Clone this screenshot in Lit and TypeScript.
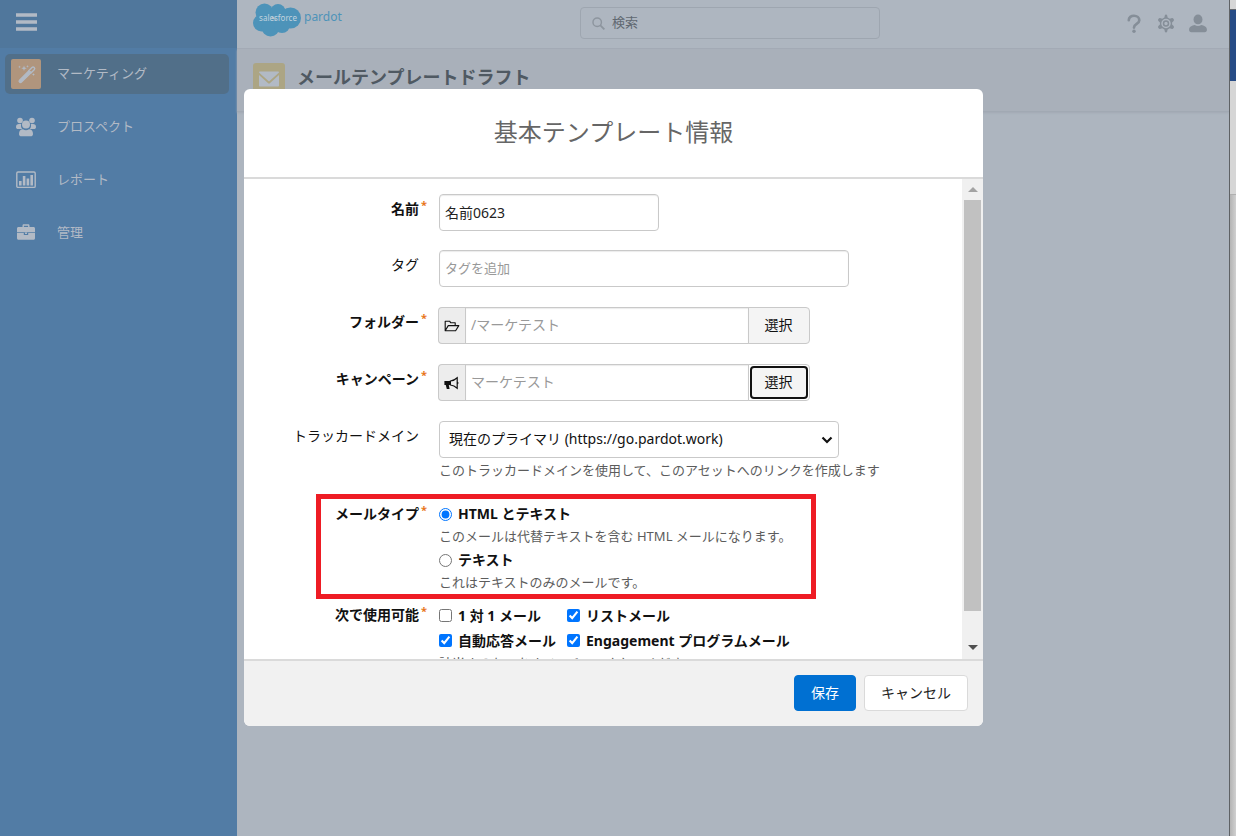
import { LitElement, html, css, svg } from "lit";
import { customElement } from "lit/decorators.js";
import { classMap } from "lit/directives/class-map.js";

const fonts = css`"Noto Sans", "Noto Sans CJK JP", sans-serif`;

const icons: Record<string, unknown> = {
  wand: svg`<path d="M3.500 16.200 12.700 7l2 2-9.200 9.200a1.400 1.400 0 0 1-2-2z" stroke="currentColor" stroke-width="1.200" stroke-linejoin="round"/><path d="m13 6.600 3-3a1.500 1.500 0 0 1 2.200 2.200l-3 3z" fill="none" stroke="currentColor" stroke-width="1.400"/><path d="m8 1.500.7 2 2 .7-2 .7L8 7l-.7-2.100-2-.7 2-.7zM3.500 1.500l.4 1 1 .4-1 .4-.4 1-.4-1-1-.4 1-.4zM11.500 1l.4 1 1 .4-1 .4-.4 1-.4-1-1-.4 1-.4zM17.500 9l.4 1.100 1.100.4-1.100.4-.4 1.100-.4-1.100-1.100-.4 1.100-.4z"/>`,
  people: svg`<circle cx="4" cy="3.500" r="2.800"/><circle cx="16" cy="3.500" r="2.800"/><path d="M0 10C0 7.900 1.200 7.100 3 7.100h2.200c-.5 1.900-.1 3.800 1 5H2.200C.8 12.100 0 11.500 0 10zM20 10c0-2.100-1.200-2.900-3-2.900h-2.200c.5 1.900.1 3.800-1 5h4c1.400 0 2.200-.6 2.200-2.100z"/><circle cx="10" cy="7.500" r="4"/><path d="M3 17c0-3 1.400-4.700 4-4.700 1.800 1.300 4.200 1.300 6 0 2.600 0 4 1.700 4 4.700 0 1.600-1 2.300-2.400 2.300H5.400C4 19.300 3 18.600 3 17z"/>`,
  chart: svg`<rect x=".8" y="2" width="18.400" height="15.400" rx="1.200" fill="none" stroke="currentColor" stroke-width="1.400"/><path d="M3 11h2.600v4.500H3zM6.800 6h2.600v9.500H6.800zM10.600 8.500h2.600v7h-2.600zM14.400 5H17v10.500h-2.600z"/>`,
  briefcase: svg`<path d="M6.500 4V2.700c0-.9.600-1.400 1.400-1.400h4.200c.8 0 1.400.5 1.400 1.400V4h4c.9 0 1.500.6 1.500 1.500V9.300H1V5.500C1 4.600 1.600 4 2.500 4zm1.400 0h4.200V2.700H7.900zM1 10.100h6.800v2h4.400v-2H19v5.200c0 .9-.6 1.500-1.500 1.500h-15c-.9 0-1.500-.6-1.500-1.500z"/><path d="M9 9.600h2v1.500H9z"/>`,
  search: svg`<circle cx="8" cy="8" r="6.500" fill="none" stroke="currentColor" stroke-width="2.200"/><path d="m12.500 12.500 6.500 6.500" stroke="currentColor" stroke-width="2.800"/>`,
  help: svg`<path d="M4.500 6.500C4.500 3.500 7 1.800 10 1.800s5.600 1.900 5.600 4.900c0 4-5.600 3.600-5.600 7.600" fill="none" stroke="currentColor" stroke-width="2.800" stroke-linecap="round"/><circle cx="10" cy="18.200" r="1.800"/>`,
  gear: svg`<path fill-rule="evenodd" d="m8.300 3.600.5-2.200Q9 .6 10 .6t1.200.8l.5 2.200 2.300 1.300 2.300-.7q.9-.2 1.500.7l.5 1q.3.900-.3 1.500L16.400 9v2l1.600 1.600q.6.600.3 1.500l-.5 1q-.6.900-1.500.7l-2.300-.7-2.300 1.300-.5 2.200q-.2.800-1.200.8t-1.200-.8l-.5-2.200L6 15.100l-2.300.7q-.9.200-1.500-.7l-.5-1q-.3-.9.300-1.500L3.600 11V9L2 7.400q-.6-.6-.3-1.500l.5-1q.6-.9 1.500-.7l2.300.7zM10 5a5 5 0 1 0 0 10 5 5 0 0 0 0-10z"/><circle cx="10" cy="10" r="2.600" fill="none" stroke="currentColor" stroke-width="1.600"/>`,
  user: svg`<ellipse cx="10" cy="5.700" rx="4.700" ry="5.200"/><path d="M.6 16.600c0-3 3-4.500 6-5 2.100 1.300 4.700 1.300 6.800 0 3 .5 6 2 6 5 0 1.700-.9 2.600-2.400 2.600H3c-1.500 0-2.400-.9-2.400-2.600z"/>`,
  folder: svg`<path d="M1.500 16V4h5.500l1.500 2H14v3M1.500 16 5.300 9.500H18.500L14.500 16z" fill="none" stroke="currentColor" stroke-width="1.400" stroke-linejoin="round"/>`,
  megaphone: svg`<path d="M.5 7.500h8v5h-2.500l1 5H3.500l-1.300-5H.5z"/><path d="M8 7.500c3-.2 6-1.600 8.500-4v13c-2.500-2.400-5.500-3.800-8.500-4z" fill="none" stroke="currentColor" stroke-width="1.500"/><path d="M16.500 8.400a1.600 1.600 0 0 1 0 3.200z"/>`,
  mail: svg`<path d="M0 3.500C0 2.700.5 2.500 1 2.500h18c.5 0 1 .2 1 1L10 12.500z"/><path d="M0 6v10.500c0 .7.400 1 1 1h18c.6 0 1-.3 1-1V6l-9.200 8.300a1.200 1.200 0 0 1-1.600 0z"/>`,
  menu: svg`<path d="M0 1.200h21v3.600H0zM0 8.200h21v3.600H0zM0 15.200h21v3.600H0z"/>`,
};

const icon = (name: string) =>
  html`<svg class="icon" viewBox="0 0 20 20" fill="currentColor" aria-hidden="true">${icons[name]}</svg>`;

const iconStyles = css`
  .icon { display: block; width: 20px; height: 20px; flex: none; overflow: visible; }
`;

@customElement("side-nav")
class SideNav extends LitElement {
  static styles = [iconStyles, css`
    :host { display: block; background: #527ca5; color: #b2bac5; font: 13px/20px ${fonts}; }
    .top { height: 48px; background: #50779c; display: flex; align-items: center; padding: 0 16px 4px; box-sizing: border-box; }
    button { border: 0; background: none; color: inherit; padding: 0; }
    nav { display: grid; gap: 13px; padding: 6px 8px 6px 5px; }
    a { display: flex; align-items: center; gap: 16px; height: 40px; padding: 0 6px; border-radius: 5px; color: inherit; text-decoration: none; }
    .active { background: #516f89; }
    .tile { width: 30px; height: 30px; border-radius: 2px; display: grid; place-items: center; }
    .text { padding-bottom: 3px; }
    .active .tile { background: #b0957d; }
  `];
  items = [["wand", "マーケティング"], ["people", "プロスペクト"], ["chart", "レポート"], ["briefcase", "管理"]];
  render() {
    return html`
      <div class="top"><button aria-label="メニュー">${icon("menu")}</button></div>
      <nav>${this.items.map(([i, text], n) => html`
        <a href="#" class=${classMap({ active: n === 0 })}><span class="tile">${icon(i)}</span><span class="text">${text}</span></a>`)}
      </nav>`;
  }
}

@customElement("app-header")
class AppHeader extends LitElement {
  static styles = [iconStyles, css`
    :host { display: block; font: 13px/20px ${fonts}; color: #4f5962; }
    header { height: 49px; display: grid; grid-template-columns: 1fr 300px 1fr; padding-right: 6px; background: #aeb6c0; border-bottom: 1px solid #a4abb5; box-sizing: border-box; }
    .logo { display: flex; gap: 2px; padding: 2px 0 0 15px; color: #4d93b9; font: 12px/30px ${fonts}; }
    .logo svg { width: 50px; height: 36px; }
    .logo text { font: 8px ${fonts}; fill: #c2d4df; }
    .search { align-self: start; margin-top: 7px; height: 32px; box-sizing: border-box; border: 1px solid #9ea6b0; border-radius: 4px; display: flex; align-items: center; gap: 7px; padding: 0 11px; color: #8d959e; }
    .search .icon { width: 13px; height: 13px; }
    input { flex: 1; min-width: 0; border: 0; padding: 0 0 3px; outline: 0; background: none; font: inherit; }
    input::placeholder { color: #606871; opacity: 1; }
    .tools { display: flex; justify-content: flex-end; align-items: center; gap: 12px; padding: 0 15px 2px 0; color: #858e98; }
    .tools button { border: 0; background: none; padding: 0; color: inherit; }
    .tools .icon { height: 19px; }
    .title { height: 63px; box-sizing: border-box; padding: 14px 16px; display: flex; gap: 12px; background: #a9b0ba; border-bottom: 1px solid #a1a9b3; box-shadow: 0 1px 2px #a1a9b3; }
    .badge { width: 32px; height: 32px; border-radius: 3px; background: #aca584; color: #b2bac5; display: grid; place-items: center; }
    h1 { margin: 0; font: bold 18px/28px ${fonts}; }
  `];
  render() {
    return html`
      <header>
        <div class="logo">
          <svg viewBox="0 0 50 36" role="img" aria-label="salesforce">
            <g fill="#4d93b9"><circle cx="12.500" cy="10.500" r="9"/><circle cx="26" cy="9.500" r="7.500"/><circle cx="38.500" cy="16" r="10.500"/><circle cx="9.500" cy="21" r="8.500"/><circle cx="18.500" cy="25.500" r="9"/><circle cx="30" cy="23" r="8"/></g>
            <text x="26" y="19" text-anchor="middle">salesforce</text>
          </svg>
          <span>pardot</span>
        </div>
        <div class="search">${icon("search")}<input aria-label="検索" placeholder="検索"></div>
        <div class="tools">
          <button aria-label="ヘルプ">${icon("help")}</button>
          <button aria-label="設定">${icon("gear")}</button>
          <button aria-label="ユーザー">${icon("user")}</button>
        </div>
      </header>
      <div class="title"><span class="badge">${icon("mail")}</span><h1>メールテンプレートドラフト</h1></div>`;
  }
}

@customElement("template-dialog")
class TemplateDialog extends LitElement {
  static styles = [iconStyles, css`
    :host { display: block; width: 739px; max-width: 100%; font: 14px/20px ${fonts}; color: #111; }
    .dialog { background: #fff; border-radius: 6px; overflow: hidden; }
    h2 { margin: 0; height: 88px; line-height: 85px; text-align: center; font-weight: 400; font-size: 24px; color: #666; }
    .view { display: flex; border: solid #dadada; border-width: 2px 0; height: calc(100vh - 356px); }
    .body { flex: 1; overflow-y: auto; scrollbar-width: none; padding-top: 15px; }
    .track { width: 21px; background: #f0f0f0; display: grid; grid-template-rows: 21px 1fr 48px; justify-items: center; }
    .track svg { width: 10px; height: 5px; align-self: center; }
    .track svg:last-child { align-self: end; margin-bottom: 9px; }
    .thumb { width: 17px; background: #c1c1c1; }
    .row { display: grid; grid-template-columns: 183px 1fr; gap: 12px; margin-bottom: 20px; position: relative; }
    .row:first-child, .row.domain { margin-bottom: 19px; }
    .row.kinds { margin-bottom: 8px; }
    .name { display: flex; justify-content: flex-end; align-self: start; padding-top: 5px; }
    .name span { width: 8px; padding-left: 2px; box-sizing: border-box; color: #e8751a; font-size: 11px; line-height: 12px; font-weight: bold; }
    .strong { font-weight: bold; }
    .field, select { height: 37px; box-sizing: border-box; border: 1px solid #c9c9c9; border-radius: 4px; background: #fff; font: inherit; color: #222; padding: 0 5px 2px; box-shadow: inset 0 1px 1px #ececec; }
    .field::placeholder { font-size: 13px; color: #999; opacity: 1; }
    .short { width: 220px; }
    .long { width: 410px; }
    select { width: 400px; padding: 0 24px 2px 9px; appearance: none; box-shadow: none; color: #111; display: block; grid-area: 1 / 1; }
    .select { display: inline-grid; vertical-align: top; }
    .select svg { grid-area: 1 / 1; place-self: center end; margin-right: 6px; width: 12px; height: 8px; pointer-events: none; }
    .group { display: flex; width: 372px; margin-left: -1px; }
    .addon { width: 27px; box-sizing: border-box; border: 1px solid #c9c9c9; border-right: 0; border-radius: 4px 0 0 4px; background: #ededed; display: grid; place-items: center; color: #111; }
    .addon .icon { width: 16px; height: 16px; }
    .group .field { flex: 1; min-width: 0; border-radius: 0; color: #999; padding-bottom: 3px; }
    .pick { position: relative; width: 62px; margin-left: -1px; border: 1px solid #c9c9c9; border-radius: 0 4px 4px 0; background: #f4f4f4; font: inherit; color: #111; padding: 0 1px 2px 0; }
    .focused { background: #fff; outline: 0; }
    .focused::before { content: ""; position: absolute; inset: 1px; border: 2px solid #111; border-radius: 4px; background: #f4f4f4; }
    .focused span { position: relative; }
    .help { margin: 0; font-size: 13px; line-height: 20px; color: #5c5c5c; }
    .help.below { padding-top: 2px; }
    .choice { display: flex; align-items: center; gap: 6px; font-weight: bold; white-space: nowrap; }
    .choice input { width: 13px; height: 13px; margin: 0; flex: none; accent-color: #0075ff; }
    .types { display: grid; grid-template-rows: 24px 22px 24px 20px; padding-top: 3px; }
    .checks { display: grid; grid-template-columns: 128px auto; justify-content: start; grid-auto-rows: 25px; padding-top: 3px; }
    .mark { position: absolute; left: 72px; top: -5px; width: 500px; height: 105px; box-sizing: border-box; border: 5px solid #ee1c24; pointer-events: none; }
    footer { height: 65px; box-sizing: border-box; background: #f1f1f1; display: flex; justify-content: flex-end; gap: 8px; padding: 14px 15px; }
    footer button { height: 36px; border: 1px solid #dadada; border-radius: 4px; background: #fff; color: #222; font: inherit; padding: 0 16px; }
    footer .save { background: #0070d2; border-color: #0070d2; color: #fff; }
  `];
  group(id: string, label: string, value: string, glyph: string, focused = false) {
    return html`<div class="row">
      <label class="name strong" for=${id}>${label}<span>*</span></label>
      <div class="group"><span class="addon">${icon(glyph)}</span><input class="field" id=${id} readonly .value=${value}><button class=${classMap({ pick: true, focused })}><span>選択</span></button></div>
    </div>`;
  }
  render() {
    return html`<div class="dialog" role="dialog" aria-labelledby="heading">
      <h2 id="heading">基本テンプレート情報</h2>
      <div class="view">
        <div class="body">
          <div class="row"><label class="name strong" for="name">名前<span>*</span></label><div><input class="field short" id="name" .value=${"名前0623"}></div></div>
          <div class="row"><label class="name" for="tag">タグ<span></span></label><div><input class="field long" id="tag" placeholder="タグを追加"></div></div>
          ${this.group("folder", "フォルダー", "/マーケテスト", "folder")}
          ${this.group("campaign", "キャンペーン", "マーケテスト", "megaphone", true)}
          <div class="row domain">
            <label class="name" for="domain">トラッカードメイン<span></span></label>
            <div>
              <div class="select"><select id="domain"><option>現在のプライマリ (https://go.pardot.work)</option></select><svg viewBox="0 0 12 8" aria-hidden="true"><path d="m1.500 1.500 4.500 4.500 4.500-4.500" fill="none" stroke="#111" stroke-width="2.200"/></svg></div>
              <p class="help below">このトラッカードメインを使用して、このアセットへのリンクを作成します</p>
            </div>
          </div>
          <div class="row kinds">
            <div class="name strong" id="type">メールタイプ<span>*</span></div>
            <div class="types" role="radiogroup" aria-labelledby="type">
              <label class="choice"><input type="radio" name="type" checked>HTML とテキスト</label>
              <p class="help">このメールは代替テキストを含む HTML メールになります。</p>
              <label class="choice"><input type="radio" name="type">テキスト</label>
              <p class="help">これはテキストのみのメールです。</p>
            </div>
            <div class="mark"></div>
          </div>
          <div class="row">
            <div class="name strong" id="use">次で使用可能<span>*</span></div>
            <div role="group" aria-labelledby="use">
              <div class="checks">
                <label class="choice"><input type="checkbox">1 対 1 メール</label>
                <label class="choice"><input type="checkbox" checked>リストメール</label>
                <label class="choice"><input type="checkbox" checked>自動応答メール</label>
                <label class="choice"><input type="checkbox" checked>Engagement プログラムメール</label>
              </div>
              <p class="help">該当するものをすべてチェックしてください。</p>
            </div>
          </div>
        </div>
        <div class="track" aria-hidden="true"><svg viewBox="0 0 10 5"><path d="M0 5h10L5 0z" fill="#a3a3a3"/></svg><div class="thumb"></div><svg viewBox="0 0 10 5"><path d="M0 0h10L5 5z" fill="#505050"/></svg></div>
      </div>
      <footer><button class="save">保存</button><button>キャンセル</button></footer>
    </div>`;
  }
}

@customElement("app-root")
class AppRoot extends LitElement {
  static styles = css`
    :host { display: grid; grid-template-columns: 237px 1fr 7px; min-height: 100vh; position: relative; background: #adb5bf; }
    .overlay { position: absolute; inset: 89px 9px 0 0; display: flex; justify-content: center; align-items: flex-start; }
    .behind { display: grid; grid-template-rows: 9px 72px 113px 1fr; border-left: 1px solid #5f6265; background: #d6d6d6; }
    .blue { background: #274c86; border-top: 1px solid #66696e; }
    .low { background: linear-gradient(90deg, #b4b4b4, #d0d0d0); border-top: 1px solid #b0b0b0; }
  `;
  render() {
    return html`<side-nav></side-nav><main><app-header></app-header></main>
      <div class="behind"><span></span><span class="blue"></span><span></span><span class="low"></span></div>
      <div class="overlay"><template-dialog></template-dialog></div>`;
  }
}
